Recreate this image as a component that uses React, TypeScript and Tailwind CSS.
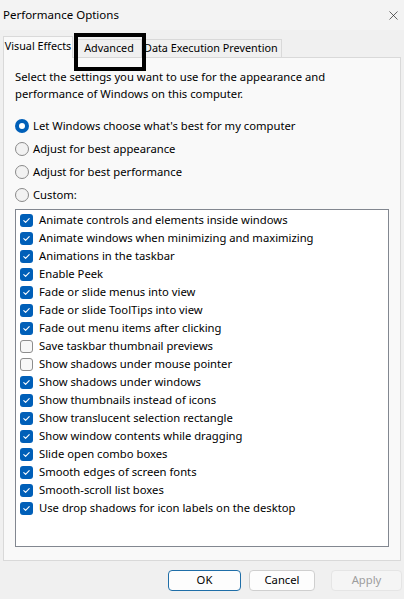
import { X } from "lucide-react";

const effects: [string, boolean][] = [
  ["Animate controls and elements inside windows", true],
  ["Animate windows when minimizing and maximizing", true],
  ["Animations in the taskbar", true],
  ["Enable Peek", true],
  ["Fade or slide menus into view", true],
  ["Fade or slide ToolTips into view", true],
  ["Fade out menu items after clicking", true],
  ["Save taskbar thumbnail previews", false],
  ["Show shadows under mouse pointer", false],
  ["Show shadows under windows", true],
  ["Show thumbnails instead of icons", true],
  ["Show translucent selection rectangle", true],
  ["Show window contents while dragging", true],
  ["Slide open combo boxes", true],
  ["Smooth edges of screen fonts", true],
  ["Smooth-scroll list boxes", true],
  ["Use drop shadows for icon labels on the desktop", true],
];

const radios = [
  "Let Windows choose what's best for my computer",
  "Adjust for best appearance",
  "Adjust for best performance",
  "Custom:",
];

function Check({ on }: { on: boolean }) {
  if (!on)
    return <span className="h-[13px] w-[13px] shrink-0 rounded-[3px] border border-[#8d8d8d] bg-[#f7f7f7]" />;
  return (
    <span className="flex h-[13px] w-[13px] shrink-0 items-center justify-center rounded-[3px] bg-[#005fb8]">
      <svg width="9" height="9" viewBox="0 0 9 9" fill="none">
        <path d="M1.8 4.7 L3.6 6.4 L7.2 2.6" stroke="white" strokeWidth="1.1" strokeLinecap="round" strokeLinejoin="round" />
      </svg>
    </span>
  );
}

function Radio({ on }: { on: boolean }) {
  if (on)
    return (
      <span className="flex h-[14px] w-[14px] shrink-0 items-center justify-center rounded-full bg-[#005fb8]">
        <span className="h-[6px] w-[6px] rounded-full bg-white" />
      </span>
    );
  return <span className="h-[14px] w-[14px] shrink-0 rounded-full border border-[#8a8a8a] bg-[#f2f2f2]" />;
}

export default function App() {
  return (
    <div className="relative flex h-[599px] w-[404px] flex-col bg-[#f0f0f0] text-[11.25px] text-black [font-family:'Noto_Sans',sans-serif]">
      {/* title bar */}
      <div className="flex h-[30px] items-center justify-between bg-[#f3f3f3] pl-[3px] pr-[3px]">
        <span className="text-[11.5px]">Performance Options</span>
        <X size={15} strokeWidth={1.1} className="text-[#222]" />
      </div>

      {/* tabs */}
      <div className="mt-[6px] flex items-end whitespace-nowrap pl-[3px] text-[10.8px]">
        <div className="relative z-10 -mb-px flex h-[22px] w-[70px] items-center justify-center border border-b-0 border-[#d9d9d9] bg-[#f9f9f9] pb-[3px]">
          Visual Effects
        </div>
        <div className="ml-[3px] flex h-[18px] w-[66px] items-center justify-center border border-b-0 border-[#d9d9d9] bg-[#f0f0f0]">
          Advanced
        </div>
        <div className="flex h-[18px] items-center border border-b-0 border-l-0 border-[#d9d9d9] bg-[#f0f0f0] pl-[2px] pr-[3px]">
          Data Execution Prevention
        </div>
      </div>

      {/* panel */}
      <div className="mx-[3px] flex h-[504px] flex-col border border-[#d9d9d9] bg-[#f9f9f9] px-[11px] pt-[10px]">
        <p className="leading-[17px]">
          Select the settings you want to use for the appearance and
          <br />
          performance of Windows on this computer.
        </p>
        <div className="mt-[15px] flex flex-col gap-[5px]">
          {radios.map((r, i) => (
            <div key={r} className="flex h-[18px] items-center gap-[4px]">
              <Radio on={i === 0} />
              <span>{r}</span>
            </div>
          ))}
        </div>
        <div className="mt-[5px] flex h-[338px] flex-col border border-[#828790] bg-white pl-[4px] pt-[1px]">
          {effects.map(([label, on]) => (
            <div key={label} className="flex h-[18px] items-center gap-[6px]">
              <Check on={on} />
              <span>{label}</span>
            </div>
          ))}
        </div>
      </div>

      {/* buttons */}
      <div className="flex justify-end pr-[2px] pt-[9px]">
        <button className="h-[21px] w-[73px] rounded-[4px] border border-[#1f6ea8] bg-[#fdfdfd]">OK</button>
        <button className="ml-[8px] h-[21px] w-[66px] rounded-[4px] border border-[#cfcfcf] bg-[#fdfdfd]">Cancel</button>
        <button className="ml-[16px] h-[21px] w-[71px] rounded-[4px] border border-[#e5e5e5] bg-[#f5f5f5] text-[#9d9d9d]">Apply</button>
      </div>

      {/* annotation box */}
      <div className="absolute left-[74px] top-[33px] h-[38px] w-[72px] border-[4px] border-black" />
    </div>
  );
}
